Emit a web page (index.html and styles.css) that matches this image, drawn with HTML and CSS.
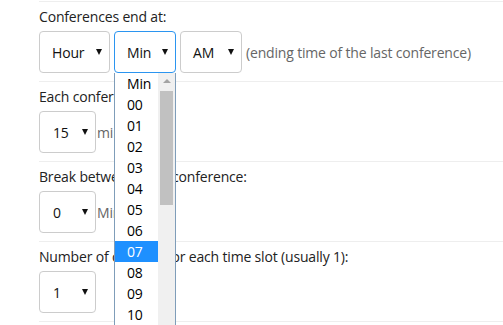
FILE: index.html
```html
<!DOCTYPE html>
<html lang="en">
<head>
    <meta charset="UTF-8">
    <title>Conference schedule</title>
    <link rel="stylesheet" href="styles.css">
</head>
<body>
    <form class="schedule">
        <div class="group">
            <label>Conferences end at:</label>
            <div class="row">
                <div class="select wide">Hour</div>
                <div class="picker">
                    <div class="select mid focused">Min</div>
                    <!-- lista abierta del select de minutos -->
                    <div class="dropdown">
                        <ul class="options">
                            <li>Min</li>
                            <li>00</li>
                            <li>01</li>
                            <li>02</li>
                            <li>03</li>
                            <li>04</li>
                            <li>05</li>
                            <li>06</li>
                            <li class="active">07</li>
                            <li>08</li>
                            <li>09</li>
                            <li>10</li>
                        </ul>
                        <div class="scrollbar">
                            <span class="arrow"></span>
                            <span class="thumb"></span>
                        </div>
                    </div>
                </div>
                <div class="select mid">AM</div>
                <span class="hint">(ending time of the last conference)</span>
            </div>
        </div>

        <div class="group">
            <label>Each conference:</label>
            <div class="row tight">
                <div class="select small">15</div>
                <span class="hint">min</span>
            </div>
        </div>

        <div class="group">
            <label>Break between each conference:</label>
            <div class="row tight">
                <div class="select small">0</div>
                <span class="hint">Min</span>
            </div>
        </div>

        <div class="group">
            <label>Number of coaches for each time slot (usually 1):</label>
            <div class="row">
                <div class="select small">1</div>
            </div>
        </div>
        <div class="group"></div>
    </form>
</body>
</html>
```

FILE: styles.css
```css
/* Estilos base */
body {
    margin: 0;
    padding-top: 1px;
    background-color: #ffffff;
    font-family: "Open Sans", "Noto Sans", sans-serif;
    font-size: 14px;
    letter-spacing: -0.17px;
    color: #222222;
    overflow: hidden;
    height: 324px;
}

.schedule {
    padding-left: 39px;
}

/* Cada bloque del formulario */
.group {
    border-top: 1px solid #eeeeee;
    padding-bottom: 8px;
}

.group label {
    display: block;
    line-height: 20px;
    margin: 5px 0 4px;
}

.row {
    display: flex;
    align-items: center;
    gap: 4px;
}
.row.tight {
    gap: 1px;
}

/* Select dibujado */
.select {
    box-sizing: border-box;
    height: 42px;
    border: 1px solid #cccccc;
    border-radius: 4px;
    padding-left: 12px;
    display: flex;
    align-items: center;
    position: relative;
    color: #111111;
}
.select::after {
    content: "";
    position: absolute;
    right: 7px;
    top: 17px;
    border-style: solid;
    border-width: 6px 3px 0 3px;
    border-color: #111111 transparent transparent transparent;
}
.wide {
    width: 71px;
}
.mid {
    width: 62px;
}
.small {
    width: 57px;
    padding-left: 13px;
}
.focused {
    border-color: #2b95f0;
}

.hint {
    color: #666666;
}

/* Lista desplegada */
.picker {
    position: relative;
}
.dropdown {
    position: absolute;
    top: 42px;
    left: 0;
    width: 62px;
    height: 260px;
    box-sizing: border-box;
    border: 1px solid #7f9db9;
    border-top: none;
    background-color: #ffffff;
    display: flex;
    overflow: hidden;
    z-index: 2;
}
.options {
    list-style: none;
    margin: 0;
    padding: 0;
    flex: 1;
}
.options li {
    height: 21px;
    line-height: 21px;
    padding-left: 12px;
    color: #000000;
}
.options li.active {
    background-color: #1e90ff;
    color: #ffffff;
}
.scrollbar {
    width: 17px;
    background-color: #f0f0f0;
    display: flex;
    flex-direction: column;
    align-items: center;
}
.arrow {
    margin-top: 6px;
    border-style: solid;
    border-width: 0 4px 4px 4px;
    border-color: transparent transparent #a3a3a3 transparent;
}
.thumb {
    margin-top: 8px;
    width: 13px;
    height: 114px;
    background-color: #c1c1c1;
}
```
